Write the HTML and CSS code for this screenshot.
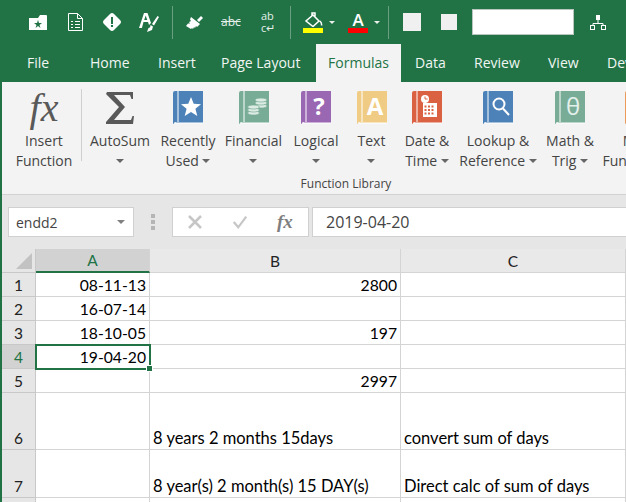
FILE: index.html
```html
<!DOCTYPE html>
<html lang="en">
<head>
<meta charset="utf-8">
<title>Excel</title>
<link rel="stylesheet" href="styles.css">
</head>
<body>
<div class="app">
  <div class="qat">
    <svg class="q q-folder" viewBox="0 0 18 16"><path class="w" d="M0 4h9l2-3h6a1 1 0 0 1 1 1v14H0z"/><path class="g" d="M9 6l1 3h3l-2.500 2 1 3L9 12l-2.500 2 1-3L5 9h3z"/></svg>
    <svg class="q q-doc" viewBox="0 0 15 18"><path class="o" d="M.5.500h9l5 5v12H.5z"/><path class="o" d="M9.500.500v5h5M3 8.500h2M7 8.500h5M3 11.500h2M7 11.500h5M3 14.500h2M7 14.500h5"/></svg>
    <svg class="q q-diamond" viewBox="0 0 18 18"><path class="w" d="M9 0q1 0 2 1l6 6q2 2 0 4l-6 6q-2 2-4 0l-6-6q-2-2 0-4l6-6q1-1 2-1z"/><path class="g" d="M8 4h2v7H8zM8 12h2v2H8z"/></svg>
    <svg class="q q-abrush" viewBox="0 0 20 19"><path class="w" d="M0 15L5 0h3.500l3.500 10-2 2-1-3H4.500l-1.600 6zM5.200 7h3L6.700 2.500z" fill-rule="evenodd"/><path class="w" d="M18.500 3l1.500 1-5 8.500-2-1.500zM11.500 12l2.500 1.500-1 3.500-5 2 1.500-4q2 0 2-3z"/></svg>
    <span class="qsep s1"></span>
    <svg class="q q-brush" viewBox="0 0 18 16"><path class="w" d="M12 6l4-4 2 2-4 4zM6 3l9 7-3 3-1-1-1 2-1-1-1 2-1-1-1 1-5-3 2-2.500 2 0-1-1.500 2-1-1-1.500z"/></svg>
    <span class="q-abc">abc</span>
    <span class="q-wrap"><span>ab</span><span>c↵</span></span>
    <span class="qsep s2"></span>
    <span class="q-color q-fill">
      <svg class="q-ci" viewBox="0 0 20 15"><path class="o thick" d="M10 3l6 6-6 5.500L3 9zM9 4V1h3v4M17 9q2 2 1.500 4.500"/></svg>
      <span class="bar yellow"></span>
    </span>
    <span class="caret white"></span>
    <span class="q-color q-font">
      <span class="q-a">A</span>
      <span class="bar red"></span>
    </span>
    <span class="caret white"></span>
    <span class="qsep s3"></span>
    <span class="sq sq1"></span>
    <span class="sq sq2"></span>
    <span class="q-input"></span>
    <svg class="q q-net" viewBox="0 0 16 15"><path class="o" d="M8 5v3M3 11V8.500h10V11"/><rect class="o" x=".5" y="10.500" width="4" height="4"/><rect class="o" x="11.500" y="10.500" width="4" height="4"/><rect class="w" x="6" y="0" width="4" height="5"/></svg>
  </div>

  <nav class="tabs">
    <span class="tab t-file">File</span>
    <span class="tab t-home">Home</span>
    <span class="tab t-insert">Insert</span>
    <span class="tab t-layout">Page Layout</span>
    <span class="tab active">Formulas</span>
    <span class="tab t-data">Data</span>
    <span class="tab t-review">Review</span>
    <span class="tab t-view">View</span>
    <span class="tab t-dev">Developer</span>
  </nav>

  <section class="ribbon">
    <div class="rb rb-insert">
      <span class="fx-big">fx</span>
      <span class="lbl">Insert<br>Function</span>
    </div>
    <span class="rsep"></span>
    <div class="group">
      <div class="buttons">
        <div class="rb w-auto">
          <svg class="ic" viewBox="0 0 30 34"><path class="sigma" d="M2 1h26v7h-1.500l-1.500-4H9l11 12-11 13h17l1.500-4H29l-1 8H1v-2l13-15L1 3z"/></svg>
          <span class="lbl">AutoSum<br><i class="caret"></i></span>
        </div>
        <div class="rb w-recent">
          <svg class="ic blue" viewBox="0 0 30 34"><path class="bk" d="M0 33V2q0-2 2-2h28v32H3v-1"/><path class="ln" d="M5 0v31"/><path class="ln" d="M1 32h29"/><path class="wf" d="M18 6l2.700 6.800 7.300.4-5.600 4.600 1.900 7.200-6.300-4-6.300 4 1.900-7.200L8 13.200l7.300-.4z"/></svg>
          <span class="lbl">Recently<br>Used <i class="caret"></i></span>
        </div>
        <div class="rb w-fin">
          <svg class="ic green" viewBox="0 0 30 34"><path class="bk" d="M0 33V2q0-2 2-2h28v32H3v-1"/><path class="ln" d="M5 0v31"/><path class="ln" d="M1 32h29"/><ellipse class="coin" cx="22" cy="15" rx="6" ry="2"/><ellipse class="coin" cx="22" cy="12" rx="6" ry="2"/><ellipse class="coin" cx="22" cy="9" rx="6" ry="2"/><ellipse class="coin" cx="14.500" cy="22" rx="6" ry="2"/><ellipse class="coin" cx="14.500" cy="19" rx="6" ry="2"/><ellipse class="coin" cx="14.500" cy="16" rx="6" ry="2"/></svg>
          <span class="lbl">Financial<br><i class="caret"></i></span>
        </div>
        <div class="rb w-log">
          <svg class="ic purple" viewBox="0 0 30 34"><path class="bk" d="M0 33V2q0-2 2-2h28v32H3v-1"/><path class="ln" d="M5 0v31"/><path class="ln" d="M1 32h29"/><text class="glyph" x="18" y="24">?</text></svg>
          <span class="lbl">Logical<br><i class="caret"></i></span>
        </div>
        <div class="rb w-text">
          <svg class="ic yellowbk" viewBox="0 0 30 34"><path class="bk" d="M0 33V2q0-2 2-2h28v32H3v-1"/><path class="ln" d="M5 0v31"/><path class="ln" d="M1 32h29"/><text class="glyph" x="18" y="24">A</text></svg>
          <span class="lbl">Text<br><i class="caret"></i></span>
        </div>
        <div class="rb w-date">
          <svg class="ic orange" viewBox="0 0 30 34"><path class="bk" d="M0 33V2q0-2 2-2h28v32H3v-1"/><path class="ln" d="M5 0v31"/><path class="ln" d="M1 32h29"/><circle class="wf" cx="13" cy="8" r="4"/><path class="cl" d="M13 5.500V8h2.500"/><path class="wf" fill-rule="evenodd" d="M11 12h14v14H11zM12.500 14.500v2h2v-2zM16 14.500v2h2v-2zM19.500 14.500v2h2v-2zM12.500 18v2h2v-2zM16 18v2h2v-2zM19.500 18v2h2v-2zM12.500 21.500v2h2v-2zM16 21.500v2h2v-2zM19.500 21.500v2h2v-2z"/></svg>
          <span class="lbl">Date &amp;<br>Time <i class="caret"></i></span>
        </div>
        <div class="rb w-look">
          <svg class="ic blue" viewBox="0 0 30 34"><path class="bk" d="M0 33V2q0-2 2-2h28v32H3v-1"/><path class="ln" d="M5 0v31"/><path class="ln" d="M1 32h29"/><circle class="mag" cx="16" cy="13" r="5.500"/><path class="mag" d="M20 17.500l6 6.500"/></svg>
          <span class="lbl">Lookup &amp;<br>Reference <i class="caret"></i></span>
        </div>
        <div class="rb w-math">
          <svg class="ic green" viewBox="0 0 30 34"><path class="bk" d="M0 33V2q0-2 2-2h28v32H3v-1"/><path class="ln" d="M5 0v31"/><path class="ln" d="M1 32h29"/><text class="glyph thin" x="18" y="24">θ</text></svg>
          <span class="lbl">Math &amp;<br>Trig <i class="caret"></i></span>
        </div>
        <div class="rb w-more">
          <svg class="ic orange2" viewBox="0 0 30 34"><path class="bk" d="M0 33V2q0-2 2-2h28v32H3v-1"/><path class="ln" d="M5 0v31"/></svg>
          <span class="lbl">More<br>Functions <i class="caret"></i></span>
        </div>
      </div>
      <div class="group-name">Function Library</div>
    </div>
  </section>

  <section class="fbar">
    <div class="namebox"><span>endd2</span><i class="caret light"></i></div>
    <div class="dots"><i></i><i></i><i></i></div>
    <div class="fxbox">
      <svg class="fb-ic" viewBox="0 0 16 16"><path d="M2 2l12 12M14 2L2 14"/></svg>
      <svg class="fb-ic" viewBox="0 0 18 16"><path d="M2 8l5 6L16 2"/></svg>
      <span class="fx-small">fx</span>
    </div>
    <div class="finput">2019-04-20</div>
  </section>

  <section class="sheet">
    <div class="hd corner"><i></i></div>
    <div class="hd col sel">A</div>
    <div class="hd col">B</div>
    <div class="hd col">C</div>

    <div class="hd rn">1</div><div class="c r">08-11-13</div><div class="c r">2800</div><div class="c"></div>
    <div class="hd rn">2</div><div class="c r">16-07-14</div><div class="c r"></div><div class="c"></div>
    <div class="hd rn">3</div><div class="c r">18-10-05</div><div class="c r">197</div><div class="c"></div>
    <div class="hd rn sel4">4</div><div class="c r active-cell">19-04-20<i class="handle"></i></div><div class="c r"></div><div class="c"></div>
    <div class="hd rn">5</div><div class="c r"></div><div class="c r">2997</div><div class="c"></div>
    <div class="hd rn">6</div><div class="c"></div><div class="c">8 years 2 months 15days</div><div class="c">convert sum of days</div>
    <div class="hd rn">7</div><div class="c"></div><div class="c">8 year(s) 2 month(s) 15 DAY(s)</div><div class="c">Direct calc of sum of days</div>
    <div class="hd rn"></div><div class="c"></div><div class="c"></div><div class="c"></div>
  </section>
</div>
</body>
</html>
```
FILE: styles.css
```css
* { box-sizing: border-box; }
html, body { margin: 0; padding: 0; }
body { width: 626px; height: 502px; overflow: hidden; background: #fff; font-family: "Open Sans", "Noto Sans", sans-serif; color: #444; }
.app { width: 626px; height: 502px; display: flex; flex-direction: column; border-left: 2px solid #217346; overflow: hidden; }

/* Quick access toolbar */
.qat { height: 44px; flex: none; background: #217346; display: flex; align-items: center; position: relative; white-space: nowrap; }
.q { display: block; flex: none; }
.w { fill: #fff; }
.g { fill: #217346; }
.o { fill: none; stroke: #fff; stroke-width: 1; }
.o.thick { stroke-width: 1.500; }
.q-folder { width: 18px; height: 16px; margin-left: 27px; }
.q-doc { width: 15px; height: 18px; margin-left: 21px; }
.q-diamond { width: 18px; height: 18px; margin-left: 20px; }
.q-abrush { width: 20px; height: 19px; margin-left: 18px; }
.qsep { width: 1px; height: 33px; background: #6a9f84; flex: none; }
.s1 { margin-left: 13px; }
.s2 { margin-left: 12px; }
.s3 { margin-left: 8px; }
.q-brush { width: 18px; height: 16px; margin-left: 12px; }
.q-abc { margin-left: 18px; width: 20px; font-size: 12px; line-height: 16px; color: #e4efe9; text-decoration: line-through; }
.q-wrap { margin-left: 20px; width: 17px; display: flex; flex-direction: column; font-size: 11px; line-height: 12px; color: #e4efe9; }
.q-color { display: flex; flex-direction: column; width: 20px; flex: none; align-items: center; }
.q-ci { width: 20px; height: 15px; margin-bottom: 1px; }
.q-fill { margin-left: 12px; }
.q-font { margin-left: 13px; }
.q-a { font-size: 17px; line-height: 15px; height: 16px; font-weight: 600; color: #fff; }
.bar { width: 20px; height: 5px; display: block; }
.yellow { background: #ff0; }
.red { background: #f00; }
.sq { background: #f0f0f0; display: block; flex: none; }
.sq1 { width: 18px; height: 18px; margin-left: 14px; }
.sq2 { width: 16px; height: 16px; margin-left: 20px; }
.q-input { width: 102px; height: 26px; background: #fff; border: 1px solid #b9c5bf; margin-left: 15px; flex: none; }
.q-net { width: 16px; height: 15px; margin-left: 16px; }

.caret { display: inline-block; width: 0; height: 0; border: 4px solid transparent; border-top: 4px solid #666; border-bottom: 0; vertical-align: middle; }
.caret.white { border-width: 3px 3px 0; border-top-color: #e9f0ec; margin-left: 6px; flex: none; }
.caret.light { border-top-color: #808080; }

/* Tabs */
.tabs { height: 38px; flex: none; background: #217346; display: flex; color: #fff; font-size: 14px; white-space: nowrap; }
.tab { display: block; line-height: 38px; flex: none; color: #f1f6f3; }
.tab.active { width: 85px; margin-left: 15px; text-align: center; background: #f3f3f3; color: #217346; }
.t-file { margin-left: 25px; width: 26px; }
.t-home { margin-left: 37px; width: 44px; }
.t-insert { margin-left: 24px; width: 40px; }
.t-layout { margin-left: 23px; width: 80px; }
.t-data { margin-left: 14px; width: 34px; }
.t-review { margin-left: 25px; width: 50px; }
.t-view { margin-left: 24px; width: 34px; }
.t-dev { margin-left: 25px; }

/* Ribbon */
.ribbon { height: 113px; flex: none; background: #f3f3f3; border-bottom: 1px solid #d2d2d2; display: flex; overflow: hidden; }
.rb { display: flex; flex-direction: column; align-items: center; flex: none; padding-top: 9px; }
.rb-insert { width: 72px; margin-left: 6px; }
.fx-big { height: 34px; font-family: "Liberation Serif", serif; font-style: italic; font-size: 40px; line-height: 34px; color: #595959; }
.rsep { width: 1px; height: 72px; margin: 7px 0 0 1px; background: #d0d0d0; flex: none; }
.group { width: 522px; flex: none; margin-left: 3px; display: flex; flex-direction: column; position: relative; }
.buttons { display: flex; height: 90px; }
.ic { width: 30px; height: 34px; display: block; }
.lbl { display: block; margin-top: 6px; font-size: 14px; line-height: 20px; text-align: center; white-space: nowrap; color: #444; }
.lbl i { position: relative; top: -1px; }
.sigma { fill: #595959; }
.bk { stroke: none; }
.ln { stroke: #fff; stroke-width: 1; fill: none; }
.blue { fill: #4d82b8; color: #4d82b8; }
.green { fill: #79ac97; }
.purple { fill: #9a67b3; }
.yellowbk { fill: #f0cb84; }
.orange { fill: #da6243; }
.orange2 { fill: #ea9a5a; }
.wf { fill: #fff; }
.coin { fill: #dcebe4; stroke: #79ac97; stroke-width: .7; }
.cl { fill: none; stroke: #da6243; stroke-width: 1; }
.mag { fill: none; stroke: #fff; stroke-width: 2; }
.glyph { fill: #fff; font-family: "Open Sans", sans-serif; font-weight: 700; font-size: 24px; text-anchor: middle; }
.glyph.thin { font-weight: 400; fill: #e4f0eb; }
.w-auto { width: 70px; }
.w-recent { width: 66px; }
.w-fin { width: 65px; }
.w-log { width: 60px; }
.w-text { width: 51px; }
.w-date { width: 60px; }
.w-look { width: 82px; }
.w-math { width: 62px; }
.w-more { width: 78px; }
.group-name { font-size: 12px; line-height: 16px; height: 16px; margin-top: 4px; text-align: center; color: #444; }

/* Formula bar */
.fbar { height: 54px; flex: none; background: #e6e6e6; display: flex; padding: 12px 0 0 6px; }
.namebox { width: 126px; height: 30px; background: #fff; border: 1px solid #d0d0d0; display: flex; align-items: center; justify-content: space-between; padding: 0 8px 0 7px; font-size: 14px; color: #444; flex: none; }
.dots { width: 4px; margin: 7px 17px 0 17px; display: flex; flex-direction: column; gap: 2px; flex: none; }
.dots i { display: block; width: 4px; height: 4px; background: #b5b5b5; }
.fxbox { width: 137px; height: 30px; background: #fff; border: 1px solid #d0d0d0; display: flex; align-items: center; padding-left: 14px; gap: 29px; flex: none; }
.fb-ic { width: 16px; height: 16px; fill: none; stroke: #c6c6c6; stroke-width: 2.500; flex: none; }
.fx-small { font-family: "Liberation Serif", serif; font-style: italic; font-size: 19px; font-weight: 700; color: #7f7f7f; }
.finput { flex: 1; height: 30px; margin-left: 3px; background: #fff; border: 1px solid #d0d0d0; border-right: 0; font-size: 16px; line-height: 28px; padding-left: 13px; color: #444; }

/* Sheet */
.sheet { flex: 1; display: grid; grid-template-columns: 34px 114px 251px 1fr; grid-template-rows: 24px repeat(5, 24px) 57px 48px 24px; font-family: Lato, "Liberation Sans", sans-serif; font-size: 16.500px; color: #000; background: #fff; position: relative; }
.hd { background: #e6e6e6; border-right: 1px solid #c8c8c8; border-bottom: 1px solid #c8c8c8; font-size: 15.500px; }
.corner { position: relative; }
.corner i { position: absolute; right: 3px; bottom: 3px; width: 0; height: 0; border-left: 16px solid transparent; border-bottom: 16px solid #c2c2c2; }
.col { display: flex; align-items: center; justify-content: center; background: #e9e9e9; border-right: 1px solid #d4d4d4; border-bottom: 1px solid #d4d4d4; color: #222; }
.col.sel { background: #d2d2d2; color: #217346; border-bottom: 2px solid #217346; }
.rn { display: flex; align-items: flex-end; justify-content: center; color: #222; line-height: 22px; }
.sel4 { background: #d2d2d2; color: #217346; }
.c { border-right: 1px solid #d4d4d4; border-bottom: 1px solid #d4d4d4; padding: 0 3px; line-height: 22px; display: flex; align-items: flex-end; white-space: nowrap; overflow: visible; }
.c.r { justify-content: flex-end; font-size: 15.700px; }
.active-cell { position: relative; outline: 2px solid #217346; outline-offset: -1px; }
.handle { position: absolute; right: -4px; bottom: -4px; width: 5px; height: 5px; background: #217346; border: 1px solid #fff; box-sizing: content-box; }
```
